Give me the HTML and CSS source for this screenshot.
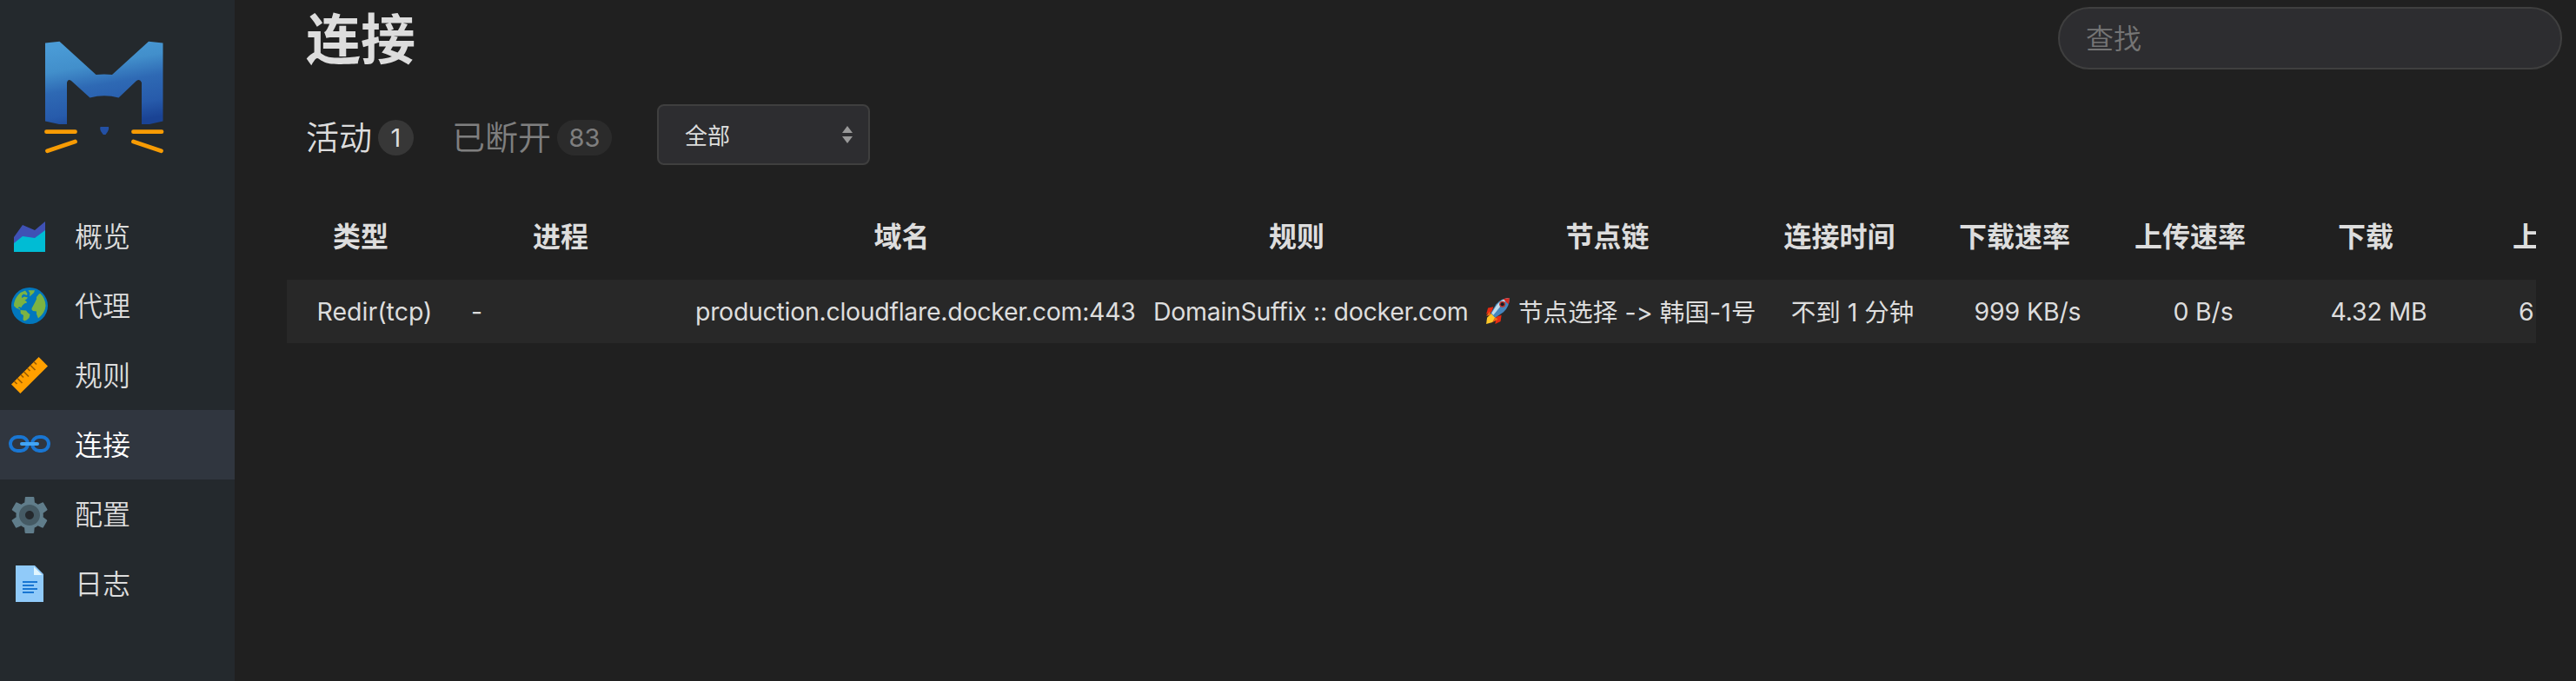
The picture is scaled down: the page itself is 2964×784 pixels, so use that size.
FILE: index.html
```html
<!DOCTYPE html>
<html lang="zh-CN">
<head>
<meta charset="utf-8">
<title>连接</title>
<link rel="stylesheet" href="styles.css">
</head>
<body>
<div class="app">
  <aside class="sidebar">
    <svg class="logo" viewBox="0 0 140 132">
      <defs>
        <linearGradient id="m" x1="0.35" y1="0" x2="0.6" y2="1">
          <stop offset="0" stop-color="#4a9bd6"/><stop offset=".28" stop-color="#428fcb"/><stop offset=".52" stop-color="#2e69b4"/><stop offset=".8" stop-color="#275bab"/><stop offset="1" stop-color="#1a4394"/>
        </linearGradient>
      </defs>
      <path fill="url(#m)" d="M2 2.500L18.500 .800L60.500 39Q70 38 79 39L121 .800L137.500 2.500V92.500L122 96H113V48Q111 43.500 107 46L86.500 65.500Q70 61 53.500 65.500L32 46Q28 43.500 27 48V96H18L2 92.500Z"/>
      <path fill="#2350a4" d="M65.500 99H75Q76 102.500 71.500 108H68.800Q64 102.500 65.500 99Z"/>
      <path stroke="#f79b04" stroke-width="4.800" stroke-linecap="round" d="M3.500 104.700H36.500M103.500 104.700H136M4.500 126.800L36.500 116M103.500 116L135.500 126.800"/>
    </svg>
    <nav class="nav">
      <a class="nav-item">
        <svg class="icon" viewBox="0 0 48 48"><path fill="#3f51b5" d="M42 37H6V25l10-14 14 6L42 7z"/><path fill="#00bcd4" d="M42 42H6V32l10-8 14 2 12-9z"/></svg>
        <span>概览</span></a>
      <a class="nav-item">
        <svg class="icon" viewBox="0 0 48 48"><circle cx="24" cy="24" r="21" fill="#0277bd"/><path fill="#7cb342" d="M35 10.200L32 14V16.200L30 20.500L26.500 27Q26 29 28 30L32 30.500V33.500L34 38.500Q42 32 42.500 24Q42 15 36.500 10ZM22.500 6.300H30L29 9L24 13.500L24.500 9.500ZM19 6.500Q14 8 11 11.500Q6 17 6 24L8.500 26.500L12 28L13.500 29L12.500 27L10.500 26.500L12 25.200L14.500 26L15.500 24L18 21.500L21 20.500L20.500 19L18.500 17.500L20.500 16.500L22 14.500L18 13.500L15 15V12.500L17 10.500L21 12L21.500 10ZM13.500 29L20 29.500L22 32L24.500 34L23.500 38L20.500 40.500L18 41.500L16.500 40L17 35L13.800 33Z"/></svg>
        <span>代理</span></a>
      <a class="nav-item">
        <svg class="icon" viewBox="0 0 48 48"><path fill="#ffa000" d="M3 34.600L34.600 3L45 13.400L13.400 45z"/><path stroke="#9a5c00" stroke-width="1.700" d="M6.500 31l3 3M10 27.500l5.500 5.500M14 23.500l3 3M17.500 20l5.500 5.500M21.500 16l3 3M25 12.500l5.500 5.500M29 8.500l3 3"/></svg>
        <span>规则</span></a>
      <a class="nav-item active">
        <svg class="icon" viewBox="0 0 48 48"><path fill="none" stroke="#1976d2" stroke-width="4" d="M10 15H14A8 8 0 0 1 14 31H10A8 8 0 0 1 10 15ZM35 15H38A8 8 0 0 1 38 31H35A8 8 0 0 1 35 15Z"/><path stroke="#42a5f5" stroke-width="4" stroke-linecap="round" d="M15 23H33"/></svg>
        <span>连接</span></a>
      <a class="nav-item">
        <svg class="icon" viewBox="0 0 48 48"><path fill="#607d8b" d="M39.600 27.200c.1-.7.2-1.400.2-2.200s-.1-1.500-.2-2.200l4.500-3.200c.4-.3.600-.9.300-1.400L40 10.800c-.3-.5-.8-.7-1.300-.4l-5 2.300c-1.200-.9-2.400-1.600-3.800-2.200l-.5-5.500c-.1-.5-.5-.9-1-.9h-8.600c-.5 0-1 .4-1 .9l-.5 5.500c-1.400.6-2.700 1.300-3.800 2.200l-5-2.300c-.5-.2-1.100 0-1.300.4l-4.300 7.400c-.3.5-.1 1.100.3 1.400l4.500 3.200c-.1.700-.2 1.400-.2 2.200s.1 1.500.2 2.200L4 30.400c-.4.3-.6.9-.3 1.400L8 39.200c.3.500.8.700 1.300.4l5-2.300c1.200.9 2.400 1.600 3.800 2.200l.5 5.500c.1.500.5.900 1 .9h8.600c.5 0 1-.4 1-.9l.5-5.500c1.400-.6 2.700-1.300 3.800-2.200l5 2.300c.5.200 1.100 0 1.300-.4l4.300-7.400c.3-.5.100-1.100-.3-1.400zM24 35c-5.500 0-10-4.500-10-10s4.500-10 10-10 10 4.500 10 10-4.500 10-10 10z"/><path fill="#455a64" d="M24 13c-6.600 0-12 5.400-12 12s5.400 12 12 12 12-5.400 12-12-5.400-12-12-12zm0 17c-2.800 0-5-2.200-5-5s2.200-5 5-5 5 2.200 5 5-2.200 5-5 5z"/></svg>
        <span>配置</span></a>
      <a class="nav-item">
        <svg class="icon" viewBox="0 0 48 48"><path fill="#90caf9" d="M40 45H8V3h22l10 10z"/><path fill="#e1f5fe" d="M38.500 14H29V4.500z"/><path fill="#1976d2" d="M16 21h17v2H16zM16 25h13v2H16zM16 29h17v2H16zM16 33h13v2H16z"/></svg>
        <span>日志</span></a>
    </nav>
  </aside>
  <main class="main">
    <header class="header">
      <h1 class="title">连接</h1>
      <input class="search" type="text" placeholder="查找">
    </header>
    <div class="toolbar">
      <div class="tab selected"><span class="tab-name">活动</span><span class="count">1</span></div>
      <div class="tab closed"><span class="tab-name">已断开</span><span class="count">83</span></div>
      <div class="select"><span>全部</span>
        <svg class="sort" viewBox="0 0 12 20"><path fill="#999" d="M0 8L6 0L12 8ZM0 12H12L6 20Z"/></svg>
      </div>
    </div>
    <div class="table-wrap">
      <div class="table">
        <div class="cell head">类型</div><div class="cell head">进程</div><div class="cell head">域名</div><div class="cell head">规则</div><div class="cell head">节点链</div><div class="cell head">连接时间</div><div class="cell head">下载速率</div><div class="cell head">上传速率</div><div class="cell head">下载</div><div class="cell head last">上</div>
        <div class="cell type">Redir(tcp)</div><div class="cell left">-</div><div class="cell left tight">production.cloudflare.docker.com:443</div><div class="cell left tight">DomainSuffix :: docker.com</div>
        <div class="cell left chain"><svg class="rocket" viewBox="0 0 28 30">
          <path fill="#e52b12" d="M9 11L3 12L1 19L7 17ZM18 20L17 27L11 30L12 22Z"/>
          <path fill="#ffc928" d="M7 18L2 23L1 30L8 28L11 23Z"/>
          <path fill="#f36a16" d="M5 16L1 21L6 20ZM11 22L8 28L14 25Z"/>
          <path fill="#4686bd" d="M27 1Q18 1 12 8L6 18L11 23L20 17Q27 11 27 1Z"/>
          <path fill="#bfdcec" d="M26 1Q18 2 12 10L7 18L9 20L18 9Z"/>
          <path fill="#d82a22" d="M27 1L20 2Q23 6 26 8Z"/>
          <circle cx="19" cy="8" r="3.400" fill="#b8332b"/><circle cx="19" cy="8" r="2" fill="#161b24"/>
        </svg><span>节点选择 -&gt; 韩国-1号</span></div>
        <div class="cell cjk">不到 1 分钟</div><div class="cell num">999 KB/s</div><div class="cell num">0 B/s</div><div class="cell num">4.32 MB</div><div class="cell last">6</div>
      </div>
    </div>
  </main>
</div>
</body>
</html>
```
FILE: styles.css
```css
* { box-sizing: border-box; }
body {
  margin: 0;
  background: #202020;
  color: #ddd;
  font-family: Inter, "Noto Sans CJK SC", sans-serif;
  font-variant-ligatures: none;
  font-feature-settings: "calt" 0;
}
.app { display: flex; height: 784px; overflow: hidden; }
.sidebar { width: 270px; flex: none; background: #24292d; padding-top: 47px; }
.logo { display: block; width: 140px; height: 132px; margin-left: 50px; }
.nav { margin-top: 53px; }
.nav-item {
  display: flex;
  align-items: center;
  gap: 28px;
  height: 80px;
  padding-left: 10px;
  font-size: 32px;
  font-weight: 350;
}
.nav-item span { padding-bottom: 4px; }
.nav-item.active { background: #30363f; color: #fff; }
.icon { width: 48px; height: 48px; }
.main { flex: 1; min-width: 0; padding: 8px 16px 0 60px; }
.header { display: flex; justify-content: space-between; height: 73px; padding-left: 22px; }
.title { margin: 0; font-size: 63px; line-height: 74px; font-weight: 700; }
.search {
  width: 580px;
  height: 72px;
  padding: 0 30px;
  border: 2px solid #3f3f3f;
  border-radius: 36px;
  background: #2d2d30;
  font: 350 32px Inter, "Noto Sans CJK SC", sans-serif;
  color: #ddd;
}
.search::placeholder { color: #757575; }
.toolbar { display: flex; align-items: center; margin-top: 39px; height: 70px; padding-left: 22px; }
.tab { display: flex; align-items: center; gap: 7px; font-size: 38px; height: 60px; margin-top: 7px; font-weight: 350; }
.tab-name { padding-bottom: 6px; }
.tab.closed { margin-left: 44px; opacity: .5; }
.count {
  height: 41px;
  min-width: 41px;
  padding: 0 13.500px;
  border-radius: 21px;
  background: #373737;
  font-size: 29px;
  font-weight: 400;
  line-height: 41px;
  text-align: center;
}
.select {
  display: flex;
  align-items: center;
  justify-content: space-between;
  width: 245px;
  height: 70px;
  margin-left: 52px;
  padding: 0 18px 0 30px;
  border: 2px solid #3f3f3f;
  border-radius: 8px;
  background: #2d2d30;
  font-size: 26px;
}
.select span { padding-bottom: 2px; }
.sort { width: 12px; height: 20px; }
.table-wrap { margin-top: 32px; margin-right: 30px; overflow: hidden; }
.table {
  display: grid;
  grid-template-columns: 202px 258px 527px 382px 333px 201px 202px 202px 202px 79px;
  grid-template-rows: 100px 73px;
  width: 2588px;
}
.cell {
  display: flex;
  align-items: center;
  justify-content: center;
  padding: 0 10px;
  font-size: 28.500px;
  white-space: nowrap;
  background: #282828;
}
.cell.head { background: none; font-size: 32px; font-weight: 600; padding: 0 42px 4px 10px; }
.cell.left { justify-content: flex-start; }
.cell.tight { letter-spacing: -.3px; }
.cell.num { letter-spacing: -.15px; padding-right: 12px; }
.cell.chain, .cell.cjk { padding-bottom: 3px; }
.cell.chain { letter-spacing: .1px; }
.cell.cjk { padding-right: 12px; }
.cell.last { justify-content: flex-start; padding-left: 59px; padding-right: 0; overflow: hidden; }
.cell.head.last { padding-left: 52px; }
.rocket { width: 29px; height: 31px; margin-right: 9px; }
```
